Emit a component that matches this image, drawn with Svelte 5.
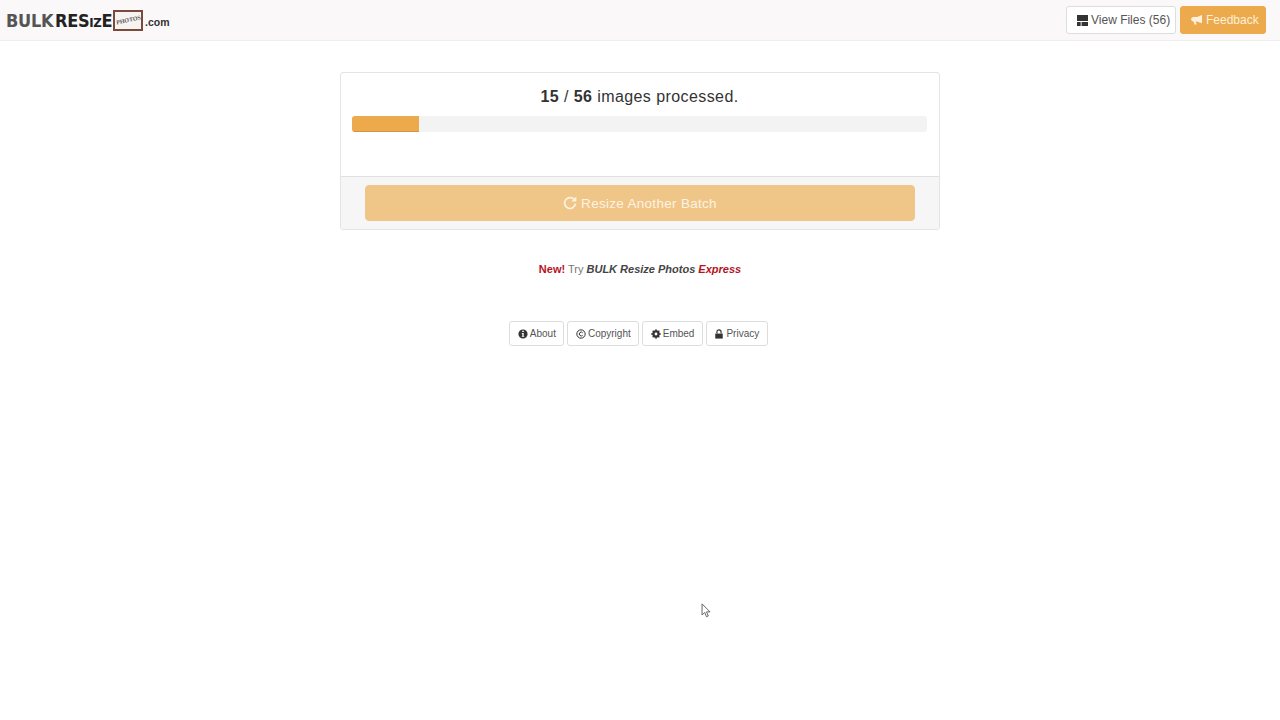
<script>
  const processed = 15;
  const total = 56;
  // bar lags behind the counter while the batch is running
  const percent = 11.65;

  const links = [
    { label: "About", icon: "info" },
    { label: "Copyright", icon: "copyright" },
    { label: "Embed", icon: "gear" },
    { label: "Privacy", icon: "lock" }
  ];
</script>

<nav class="navbar">
  <a class="logo" href="#top">
    <span class="bulk">BULK</span>
    <span class="resize">RES<small>IZ</small>E</span>
    <span class="photo-box"><span>PHOTOS</span></span>
    <span class="com">.com</span>
  </a>
  <div class="nav-actions">
    <button class="btn btn-default">
      <svg class="icon" viewBox="0 0 12 12" width="11" height="11"><path d="M0 0h12v6.500H0zM0 7.500h4V12H0zM5 7.500h7V12H5z" fill="currentColor" /></svg>
      <span>View Files ({total})</span>
    </button>
    <button class="btn btn-warning">
      <svg class="icon" viewBox="0 0 14 12" width="12" height="10"><path d="M13 0v10L7 7.800H5.500L6.500 11.500H4L3 7.800H2.500C1 7.800 0 6.700 0 5.200S1 2.500 2.500 2.500H7z" fill="currentColor" /></svg>
      <span>Feedback</span>
    </button>
  </div>
</nav>

<main class="container">
  <section class="panel">
    <div class="panel-body">
      <p class="status"><b>{processed}</b> / <b>{total}</b> images processed.</p>
      <div class="progress"><div class="progress-bar" style="width: {percent}%"></div></div>
    </div>
    <div class="panel-footer">
      <button class="btn-batch">
        <svg class="refresh" viewBox="0 0 14 14" width="14" height="14">
          <path d="M11.600 4.200A5.400 5.400 0 1 0 12.400 7.700" fill="none" stroke="currentColor" stroke-width="1.700" />
          <path d="M13.300 0.600v5h-5z" fill="currentColor" />
        </svg>
        <span>Resize Another Batch</span>
      </button>
    </div>
  </section>

  <p class="promo"><b class="red">New!</b> Try <b class="name"><i>BULK Resize Photos</i></b> <b class="red"><i>Express</i></b></p>

  <div class="links">
    {#each links as link}
      <button class="btn-xs">
        {#if link.icon === "info"}
          <svg viewBox="0 0 12 12" width="10" height="10"><path fill-rule="evenodd" d="M6 .5a5.500 5.500 0 1 1 0 11 5.500 5.500 0 0 1 0-11zM5 2v1.700h2V2zM4.500 4.800v1h.7v2.500h-.7v1h3v-1h-.7V4.800z" fill="currentColor" /></svg>
        {:else if link.icon === "copyright"}
          <svg viewBox="0 0 12 12" width="10" height="10"><circle cx="6" cy="6" r="5" fill="none" stroke="currentColor" stroke-width="1.200" /><path d="M8 4.500A2.300 2.300 0 1 0 8 7.500" fill="none" stroke="currentColor" stroke-width="1.200" /></svg>
        {:else if link.icon === "gear"}
          <svg viewBox="0 0 12 12" width="10" height="10"><circle cx="6" cy="6" r="3.300" fill="none" stroke="currentColor" stroke-width="2.200" /><path d="M6 .3v11.400M.3 6h11.400M2 2l8 8M10 2l-8 8" stroke="currentColor" stroke-width="1.600" /><circle cx="6" cy="6" r="1.700" fill="#fff" /></svg>
        {:else}
          <svg viewBox="0 0 12 12" width="10" height="10"><path d="M1.500 5.500h9v6h-9z" fill="currentColor" /><path d="M3.500 5.500V3.500a2.500 2.500 0 0 1 5 0v2" fill="none" stroke="currentColor" stroke-width="1.400" /></svg>
        {/if}
        <span>{link.label}</span>
      </button>
    {/each}
  </div>
</main>

<svg class="cursor" viewBox="0 0 12 18" width="11" height="16">
  <path d="M1 1v12.500l3-2.800 2 4.800 2-.9-2-4.600h4z" fill="#fff" stroke="#555" stroke-width="1" />
</svg>

<style>
  :global(body) {
    background: #fff;
    font-family: "Liberation Sans", Arial, sans-serif;
    color: #333;
  }

  .navbar {
    height: 40px;
    background: #faf8f8;
    border-bottom: 1px solid #f0eeee;
    display: flex;
    align-items: center;
    justify-content: space-between;
    padding: 0 14px 0 6px;
  }

  .logo {
    display: flex;
    align-items: center;
    color: #222;
    text-decoration: none;
    white-space: nowrap;
    height: 24px;
  }

  .bulk {
    font-family: "DejaVu Sans Condensed", "DejaVu Sans", sans-serif;
    font-weight: 700;
    font-size: 18px;
    letter-spacing: -0.300px;
    color: #555;
    width: 49px;
  }

  .resize {
    font-family: "DejaVu Sans Condensed", "DejaVu Sans", sans-serif;
    font-weight: 700;
    font-size: 18px;
    letter-spacing: -0.300px;
    color: #222;
    width: 58px;
  }

  .resize small {
    font-size: 13px;
  }

  .photo-box {
    box-sizing: border-box;
    width: 30px;
    height: 21px;
    border: 2px solid #7b4a3c;
    background: #f6f4f1;
    display: flex;
    align-items: center;
    justify-content: center;
    overflow: hidden;
  }

  .photo-box span {
    font-family: "Liberation Serif", serif;
    font-weight: 700;
    font-size: 6px;
    color: #555;
    transform: rotate(-12deg);
  }

  .com {
    font-weight: 700;
    font-size: 10.500px;
    color: #333;
    margin-left: 2px;
    padding-top: 4px;
  }

  .nav-actions {
    display: flex;
    gap: 4px;
  }

  .btn {
    font: 12px "Liberation Sans", Arial, sans-serif;
    height: 28px;
    padding: 0 10px;
    border-radius: 3px;
    border: 1px solid #ddd;
    display: flex;
    align-items: center;
    gap: 3px;
    white-space: nowrap;
  }

  .btn-default {
    width: 110px;
    background: #fff;
    color: #333;
  }

  .btn-default span {
    color: #555;
  }

  .btn-warning {
    width: 86px;
    background: #ecaa4c;
    border-color: #ecaa4c;
    color: #fdf0dc;
  }

  .icon {
    flex: none;
  }

  .container {
    width: 600px;
    margin: 31px auto 0;
    display: flex;
    flex-direction: column;
    align-items: center;
  }

  .panel {
    box-sizing: border-box;
    width: 600px;
    height: 158px;
    border: 1px solid #e4e4e4;
    border-radius: 3px;
    overflow: hidden;
    display: flex;
    flex-direction: column;
  }

  .panel-body {
    flex: 1;
    padding: 13px 12px 0 11px;
  }

  .status {
    margin: 0 0 9px;
    height: 21px;
    text-align: center;
    font-size: 16px;
    line-height: 21px;
    letter-spacing: 0.420px;
    color: #333;
  }

  .progress {
    height: 16px;
    width: 575px;
    background: #f3f3f3;
    border-radius: 3px;
    overflow: hidden;
  }

  .progress-bar {
    height: 100%;
    background: #ecaa4c;
    box-shadow: inset 0 -1px 0 rgba(0, 0, 0, 0.12);
  }

  .panel-footer {
    height: 53px;
    background: #f6f6f6;
    border-top: 1px solid #e0e0e0;
    display: flex;
    justify-content: center;
    padding-top: 8px;
    box-sizing: border-box;
  }

  .btn-batch {
    width: 550px;
    height: 36px;
    border: 1px solid #f0c588;
    border-radius: 4px;
    background: #f0c588;
    color: #fdf3e2;
    font: 13.500px "Liberation Sans", Arial, sans-serif;
    letter-spacing: 0.300px;
    display: flex;
    align-items: center;
    justify-content: center;
    gap: 4px;
  }

  .promo {
    margin: 32px 0 0;
    height: 15px;
    line-height: 15px;
    font-size: 11px;
    color: #777;
    text-align: center;
  }

  .red {
    color: #b5141c;
  }

  .name {
    color: #444;
  }

  .links {
    display: flex;
    gap: 3px;
    margin-top: 44px;
    margin-left: -3px;
  }

  .btn-xs {
    height: 25px;
    padding: 0 7.500px;
    background: #fff;
    border: 1px solid #ddd;
    border-radius: 3px;
    color: #333;
    font: 10px "Liberation Sans", Arial, sans-serif;
    display: flex;
    align-items: center;
    gap: 2px;
    white-space: nowrap;
  }

  .btn-xs span {
    color: #555;
  }

  .cursor {
    position: absolute;
    left: 701px;
    top: 603px;
  }
</style>
